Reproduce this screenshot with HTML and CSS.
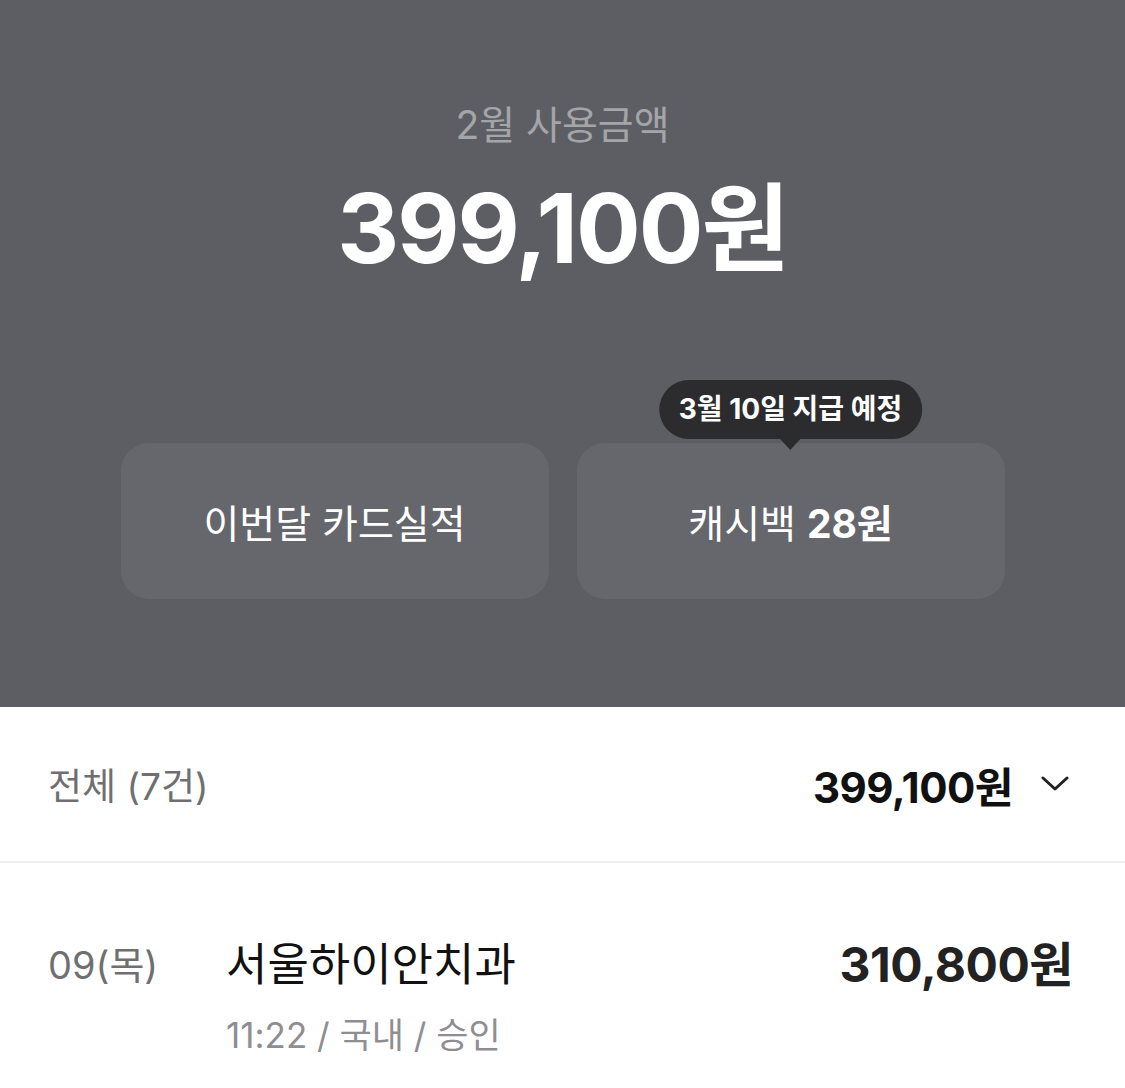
FILE: index.html
```html
<!DOCTYPE html>
<html lang="ko">
<head>
    <meta charset="UTF-8">
    <meta name="viewport" content="width=device-width, initial-scale=1.0">
    <title>2월 사용금액</title>
    <link rel="stylesheet" href="styles.css">
</head>
<body>
    <section class="summary">
        <div class="summary-label">2월 사용금액</div>
        <div class="summary-amount">399,100원</div>

        <div class="summary-cards">
            <div class="card">이번달 카드실적</div>
            <div class="card card-cashback">
                <span class="tooltip">3월 10일 지급 예정</span>
                캐시백&nbsp;<strong>28원</strong>
            </div>
        </div>
    </section>

    <section class="history">
        <div class="total-row">
            <span class="total-label">전체 (7건)</span>
            <span class="total-amount">
                399,100원
                <svg class="chevron" width="28" height="16" viewBox="0 0 28 16">
                    <path d="M2 2 L14 13 L26 2" fill="none" stroke="#222" stroke-width="3" stroke-linecap="round" stroke-linejoin="round"/>
                </svg>
            </span>
        </div>

        <div class="tx">
            <div class="tx-date">09(목)</div>
            <div class="tx-body">
                <div class="tx-name">서울하이안치과</div>
                <div class="tx-meta">11:22 / 국내 / 승인</div>
            </div>
            <div class="tx-amount">310,800원</div>
        </div>
    </section>
</body>
</html>
```

FILE: styles.css
```css
body {
    margin: 0;
    font-family: Inter, "Noto Sans CJK KR", sans-serif;
    background-color: #fff;
    color: #111;
}

/* 상단 요약 영역 */
.summary {
    height: 707px;
    box-sizing: border-box;
    background-color: #5d5e63;
    padding-top: 100px;
    display: flex;
    flex-direction: column;
    align-items: center;
}

.summary-label {
    font-size: 39px;
    line-height: 50px;
    color: #a4a5a9;
}

.summary-amount {
    margin-top: 23px;
    font-size: 96px;
    line-height: 110px;
    font-weight: 700;
    color: #fff;
    letter-spacing: -2px;
}

.summary-cards {
    margin-top: 160px;
    display: flex;
    gap: 28px;
}

.card {
    position: relative;
    width: 428px;
    height: 156px;
    border-radius: 28px;
    background-color: #66676c;
    color: #fff;
    font-size: 39px;
    display: flex;
    align-items: center;
    justify-content: center;
}

.card strong {
    font-weight: 700;
}

.tooltip {
    position: absolute;
    top: -63px;
    left: 50%;
    transform: translateX(-50%);
    white-space: nowrap;
    background-color: #2c2c2e;
    color: #fff;
    font-size: 28px;
    font-weight: 700;
    line-height: 59px;
    padding: 0 20px;
    border-radius: 30px;
}

.tooltip::after {
    content: "";
    position: absolute;
    left: 50%;
    bottom: -11px;
    transform: translateX(-50%);
    border-left: 11px solid transparent;
    border-right: 11px solid transparent;
    border-top: 12px solid #2c2c2e;
}

/* 이용내역 */
.total-row {
    height: 156px;
    box-sizing: border-box;
    padding: 0 56px 0 48px;
    display: flex;
    align-items: center;
    justify-content: space-between;
    border-bottom: 2px solid #efefef;
}

.total-label {
    font-size: 37px;
    color: #6f6f72;
}

.total-amount {
    font-size: 42px;
    font-weight: 700;
    color: #111;
    letter-spacing: -0.5px;
    display: flex;
    align-items: center;
    gap: 28px;
}

.tx {
    display: flex;
    align-items: flex-start;
    padding: 74px 52px 0 48px;
}

.tx-date {
    width: 178px;
    font-size: 38px;
    line-height: 56px;
    color: #6f6f72;
}

.tx-body {
    flex: 1;
}

.tx-name {
    font-size: 45px;
    line-height: 56px;
    color: #111;
}

.tx-meta {
    margin-top: 22px;
    font-size: 35px;
    line-height: 40px;
    color: #8e8e92;
}

.tx-amount {
    font-size: 48px;
    line-height: 56px;
    font-weight: 700;
    color: #222;
    letter-spacing: -0.5px;
}
```
